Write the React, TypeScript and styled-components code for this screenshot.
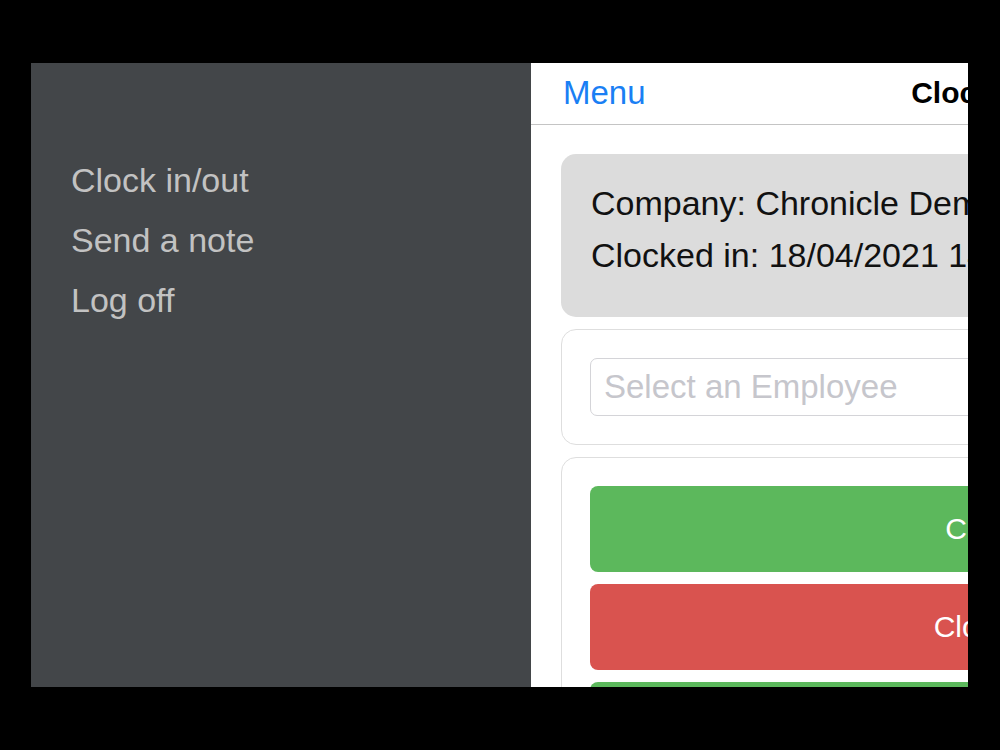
import styled, { createGlobalStyle } from "styled-components";

const GlobalStyle = createGlobalStyle`
  html, body {
    margin: 0;
    padding: 0;
    background: #000;
    font-family: "Liberation Sans", Arial, sans-serif;
  }
`;

type Action = {
  label: string;
  tone: "go" | "stop";
};

const actions: Action[] = [
  { label: "Clock In", tone: "go" },
  { label: "Clock Out", tone: "stop" },
  { label: "Start Break", tone: "go" },
];

const menuItems = ["Clock in/out", "Send a note", "Log off"];

export default function App() {
  return (
    <>
      <GlobalStyle />
      <Screen>
        <Frame>
          <SideMenu>
            {menuItems.map((item) => (
              <SideItem key={item}>{item}</SideItem>
            ))}
          </SideMenu>

          <Content>
            <NavBar>
              <NavButton>Menu</NavButton>
              <NavTitle>Clock In/Out</NavTitle>
              <span />
            </NavBar>

            <Body>
              <InfoCard>
                <InfoLine>Company: Chronicle Demo Company</InfoLine>
                <InfoLine>Clocked in: 18/04/2021 14:32</InfoLine>
              </InfoCard>

              <Panel>
                <EmployeeSelect>Select an Employee</EmployeeSelect>
              </Panel>

              <Panel>
                <ButtonStack>
                  {actions.map((a) => (
                    <ActionButton key={a.label} $tone={a.tone}>
                      {a.label}
                    </ActionButton>
                  ))}
                </ButtonStack>
              </Panel>
            </Body>
          </Content>
        </Frame>
      </Screen>
    </>
  );
}

const Screen = styled.div`
  width: 1000px;
  height: 750px;
  padding: 63px 0 0 31px;
  box-sizing: border-box;
  background: #000;
  overflow: hidden;
`;

const Frame = styled.div`
  display: flex;
  width: 937px;
  height: 624px;
  overflow: hidden;
`;

const SideMenu = styled.nav`
  flex: 0 0 500px;
  display: flex;
  flex-direction: column;
  padding: 87px 0 0 40px;
  box-sizing: border-box;
  background: #434649;
`;

const SideItem = styled.div`
  font-size: 34px;
  line-height: 60px;
  color: #c2c2c2;
`;

const Content = styled.main`
  flex: 0 0 937px;
  display: flex;
  flex-direction: column;
  background: #fff;
`;

const NavBar = styled.header`
  flex-shrink: 0;
  display: grid;
  grid-template-columns: 1fr auto 1fr;
  align-items: center;
  height: 62px;
  padding: 0 32px 2px;
  box-sizing: border-box;
  border-bottom: 1px solid #c4c4c4;
`;

const NavButton = styled.span`
  font-size: 33px;
  color: #1a7ff4;
`;

const NavTitle = styled.span`
  font-size: 30px;
  font-weight: bold;
  color: #000;
`;

const Body = styled.div`
  flex-shrink: 0;
  display: flex;
  flex-direction: column;
  gap: 12px;
  padding: 29px 30px 0;
`;

const InfoCard = styled.section`
  padding: 23px 30px 36px;
  border-radius: 15px;
  background: #dcdcdc;
`;

const InfoLine = styled.div`
  font-size: 34px;
  line-height: 52px;
  color: #111;
  white-space: nowrap;
`;

const Panel = styled.section`
  padding: 28px;
  border: 1px solid #dedede;
  border-radius: 15px;
  background: #fff;
`;

const EmployeeSelect = styled.div`
  display: flex;
  align-items: center;
  height: 58px;
  padding: 0 13px;
  box-sizing: border-box;
  border: 1px solid #d4d4d8;
  border-radius: 7px;
  font-size: 33px;
  color: #c6c6cc;
`;

const ButtonStack = styled.div`
  display: flex;
  flex-direction: column;
  gap: 12px;
`;

const ActionButton = styled.button<{ $tone: "go" | "stop" }>`
  height: 86px;
  border: none;
  border-radius: 8px;
  background: ${(p) => (p.$tone === "go" ? "#5cb85c" : "#d9534f")};
  color: #fff;
  font-family: inherit;
  font-size: 30px;
`;
